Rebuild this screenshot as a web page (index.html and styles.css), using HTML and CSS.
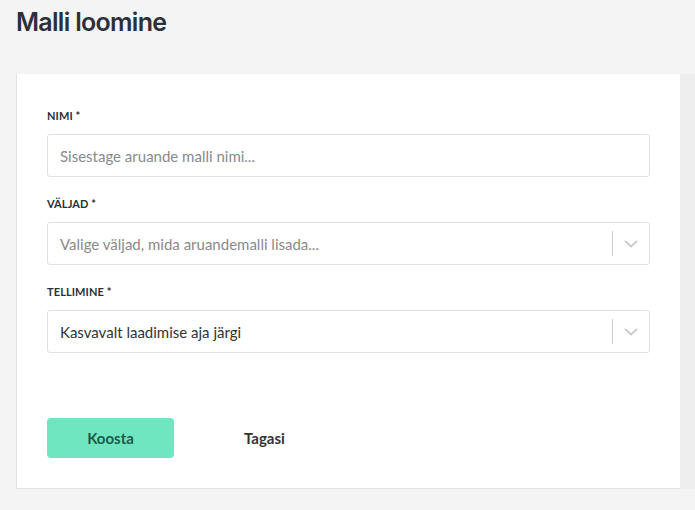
FILE: index.html
```html
<!DOCTYPE html>
<html lang="et">
<head>
<meta charset="utf-8">
<title>Malli loomine</title>
<link rel="stylesheet" href="styles.css">
</head>
<body>
<h1 class="page-title">Malli loomine</h1>
<div class="content-row">
  <form class="card">
    <div class="field">
      <label class="field-label">NIMI *</label>
      <div class="input"><span class="placeholder">Sisestage aruande malli nimi...</span></div>
    </div>
    <div class="field">
      <label class="field-label">VÄLJAD *</label>
      <div class="input select">
        <span class="placeholder">Valige väljad, mida aruandemalli lisada...</span>
        <span class="select-sep"></span>
        <svg class="chevron" width="14" height="8" viewBox="0 0 14 8"><path d="M1.5 1.5 L7 6.5 L12.5 1.5" fill="none" stroke="#cccccc" stroke-width="2" stroke-linecap="round" stroke-linejoin="round"/></svg>
      </div>
    </div>
    <div class="field">
      <label class="field-label">TELLIMINE *</label>
      <div class="input select">
        <span class="value">Kasvavalt laadimise aja järgi</span>
        <span class="select-sep"></span>
        <svg class="chevron" width="14" height="8" viewBox="0 0 14 8"><path d="M1.5 1.5 L7 6.5 L12.5 1.5" fill="none" stroke="#cccccc" stroke-width="2" stroke-linecap="round" stroke-linejoin="round"/></svg>
      </div>
    </div>
    <div class="actions">
      <button type="button" class="btn-primary">Koosta</button>
      <button type="button" class="btn-link">Tagasi</button>
    </div>
  </form>
  <div class="side"></div>
</div>
</body>
</html>
```
FILE: styles.css
```css
html, body {
  margin: 0;
  padding: 0;
  background: #f4f4f4;
}
body {
  font-family: Lato, "Open Sans", sans-serif;
  color: #2d2f36;
}
.page-title {
  margin: 0;
  padding: 6px 0 0 16px;
  height: 74px;
  box-sizing: border-box;
  font-family: Inter, "Liberation Sans", sans-serif;
  font-weight: 600;
  font-size: 25px;
  line-height: 32px;
  letter-spacing: -0.7px;
  color: #2c2f38;
}
.content-row {
  display: flex;
}
.card {
  margin-left: 16px;
  width: 664px;
  box-sizing: border-box;
  background: #ffffff;
  border-left: 1px solid #e1e4e8;
  border-bottom: 1px solid #e1e4e8;
  padding: 34px 30px 30px 30px;
  display: flex;
  flex-direction: column;
}
.side {
  flex: 1;
  background: #eeeeee;
}
.field {
  display: flex;
  flex-direction: column;
  margin-bottom: 19px;
}
.field-label {
  font-size: 11px;
  font-weight: 700;
  line-height: 16px;
  color: #2d2f36;
  margin-bottom: 10px;
  letter-spacing: 0.1px;
}
.input {
  height: 43px;
  box-sizing: border-box;
  border: 1px solid #dfe2e5;
  border-radius: 3px;
  display: flex;
  align-items: center;
  padding: 0 12px;
  font-size: 15px;
}
.input.select {
  padding-right: 0;
}
.placeholder {
  color: #8a8a8a;
  flex: 1;
}
.value {
  color: #333333;
  flex: 1;
}
.select-sep {
  width: 1px;
  height: 25px;
  background: #cccccc;
}
.chevron {
  margin: 0 11px 0 11px;
}
.actions {
  display: flex;
  align-items: center;
  margin-top: 46px;
}
.btn-primary {
  width: 127px;
  height: 40px;
  border: none;
  border-radius: 4px;
  background: #70e6c0;
  color: #1c5a47;
  font-family: Lato, sans-serif;
  font-weight: 700;
  font-size: 15px;
}
.btn-link {
  margin-left: 54px;
  border: none;
  background: none;
  padding: 0 16px;
  font-family: Lato, sans-serif;
  font-weight: 700;
  font-size: 15px;
  color: #333333;
}
```
